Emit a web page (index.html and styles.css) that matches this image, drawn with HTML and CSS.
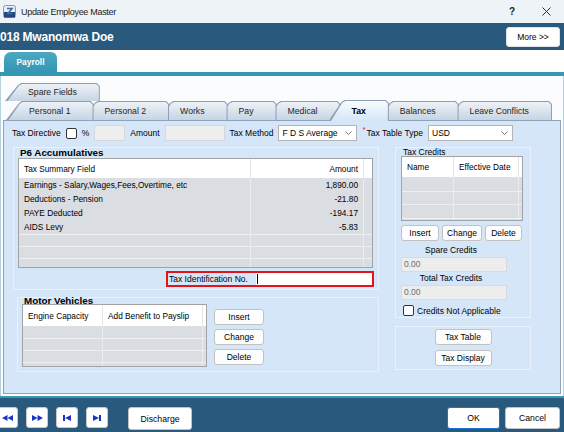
FILE: index.html
```html
<!DOCTYPE html>
<html lang="en">
<head>
    <meta charset="UTF-8">
    <title>Update Employee Master</title>
    <link rel="stylesheet" href="styles.css">
</head>
<body>
    <div class="window">
        <div class="titlebar">
            <svg class="app-icon" viewBox="0 0 13 13">
                <rect x="0.5" y="0.5" width="12" height="12" rx="2" fill="#e9eef3" stroke="#8a98a8"/>
                <rect x="1" y="7" width="11" height="5.5" fill="#25467c"/>
                <path d="M4 3.5 h5 l-4 5 h4.5" fill="none" stroke="#3a6fb5" stroke-width="1.6"/>
            </svg>
            <span class="title">Update Employee Master</span>
            <span class="help">?</span>
            <svg class="close" viewBox="0 0 9 9">
                <path d="M0.5 0.5 L8.5 8.5 M8.5 0.5 L0.5 8.5" stroke="#2a2a2a" stroke-width="1"/>
            </svg>
        </div>

        <div class="header">
            <span class="employee">018 Mwanomwa Doe</span>
            <button class="btn btn-more">More &gt;&gt;</button>
        </div>

        <div class="modules">
            <div class="module-tab">Payroll</div>
        </div>

        <div class="frame">
            <div class="tabstrip">
                <div class="tab-row first-row">
                    <div class="tab">Spare Fields</div>
                </div>
                <div class="tab-row">
                    <div class="tab">Personal 1</div>
                    <div class="tab">Personal 2</div>
                    <div class="tab">Works</div>
                    <div class="tab">Pay</div>
                    <div class="tab">Medical</div>
                    <div class="tab active">Tax</div>
                    <div class="tab">Balances</div>
                    <div class="tab">Leave Conflicts</div>
                </div>
            </div>

            <div class="page">
                <div class="tax-row">
                    <span>Tax Directive</span>
                    <span class="check"></span>
                    <span>%</span>
                    <span class="field field-pct"></span>
                    <span>Amount</span>
                    <span class="field field-amount"></span>
                    <span>Tax Method</span>
                    <div class="select select-method">
                        <span>F D S Average</span>
                        <svg class="chevron" viewBox="0 0 7 4"><polyline points="0.5,0.5 3.5,3.5 6.5,0.5" fill="none" stroke="#666" stroke-width="0.9"/></svg>
                    </div>
                    <span class="required">*</span>
                    <span>Tax Table Type</span>
                    <div class="select select-table">
                        <span>USD</span>
                        <svg class="chevron" viewBox="0 0 7 4"><polyline points="0.5,0.5 3.5,3.5 6.5,0.5" fill="none" stroke="#666" stroke-width="0.9"/></svg>
                    </div>
                </div>

                <div class="page-body">
                    <div class="left-col">
                        <div class="group p6">
                            <div class="group-title">P6 Accumulatives</div>
                            <div class="grid p6-grid">
                                <div class="th">Tax Summary Field</div>
                                <div class="th num">Amount</div>
                                <div class="th fill"></div>

                                <div>Earnings - Salary,Wages,Fees,Overtime, etc</div>
                                <div class="num">1,890.00</div>
                                <div class="fill"></div>

                                <div>Deductions - Pension</div>
                                <div class="num">-21.80</div>
                                <div class="fill"></div>

                                <div>PAYE Deducted</div>
                                <div class="num">-194.17</div>
                                <div class="fill"></div>

                                <div>AIDS Levy</div>
                                <div class="num">-5.83</div>
                                <div class="fill"></div>

                                <div class="line"></div><div class="line"></div><div class="line fill"></div>
                                <div class="line"></div><div class="line"></div><div class="line fill"></div>
                                <div class="line"></div><div class="line"></div><div class="line fill"></div>
                            </div>
                            <div class="tin-row">
                                <div class="tin">
                                    <span class="tin-label">Tax Identification No.</span>
                                    <span class="tin-input"><span class="caret"></span></span>
                                </div>
                            </div>
                        </div>

                        <div class="group motor">
                            <div class="group-title">Motor Vehicles</div>
                            <div class="motor-body">
                                <div class="grid motor-grid">
                                    <div class="th">Engine Capacity</div>
                                    <div class="th">Add Benefit to Payslip</div>
                                    <div class="th fill"></div>
                                    <div></div><div></div><div class="fill"></div>
                                    <div class="line"></div><div class="line"></div><div class="line fill"></div>
                                    <div class="line"></div><div class="line"></div><div class="line fill"></div>
                                    <div class="line"></div><div class="line"></div><div class="line fill"></div>
                                </div>
                                <div class="motor-actions">
                                    <button class="btn">Insert</button>
                                    <button class="btn">Change</button>
                                    <button class="btn">Delete</button>
                                </div>
                            </div>
                        </div>
                    </div>

                    <div class="right-col">
                        <div class="group credits">
                            <div class="group-title">Tax Credits</div>
                            <div class="grid credits-grid">
                                <div class="th">Name</div>
                                <div class="th">Effective Date</div>
                                <div class="th fill"></div>
                                <div></div><div></div><div class="fill"></div>
                                <div class="line"></div><div class="line"></div><div class="line fill"></div>
                                <div class="line"></div><div class="line"></div><div class="line fill"></div>
                                <div class="line"></div><div class="line"></div><div class="line fill"></div>
                            </div>
                            <div class="credit-actions">
                                <button class="btn btn-insert">Insert</button>
                                <button class="btn btn-change">Change</button>
                                <button class="btn btn-delete">Delete</button>
                            </div>
                            <div class="caption">Spare Credits</div>
                            <div class="readonly">0.00</div>
                            <div class="caption">Total Tax Credits</div>
                            <div class="readonly">0.00</div>
                            <div class="check-row">
                                <span class="check"></span>
                                <span>Credits Not Applicable</span>
                            </div>
                        </div>

                        <div class="group tables">
                            <button class="btn">Tax Table</button>
                            <button class="btn">Tax Display</button>
                        </div>
                    </div>
                </div>
            </div>
        </div>

        <div class="footer">
            <button class="nav">
                <svg viewBox="0 0 11 6"><polygon points="0,3 5.5,0 5.5,6"/><polygon points="5.5,3 11,0 11,6"/></svg>
            </button>
            <button class="nav">
                <svg viewBox="0 0 11 6"><polygon points="0,0 5.5,3 0,6"/><polygon points="5.5,0 11,3 5.5,6"/></svg>
            </button>
            <button class="nav">
                <svg class="single" viewBox="0 0 8 6"><rect x="0" y="0" width="2" height="6"/><polygon points="2,3 8,0 8,6"/></svg>
            </button>
            <button class="nav">
                <svg class="single" viewBox="0 0 8 6"><polygon points="0,0 6,3 0,6"/><rect x="6" y="0" width="2" height="6"/></svg>
            </button>
            <button class="btn btn-discharge">Discharge</button>
            <button class="btn btn-ok">OK</button>
            <button class="btn btn-cancel">Cancel</button>
        </div>
    </div>
</body>
</html>
```

FILE: styles.css
```css
* {
    box-sizing: border-box;
}

body {
    margin: 0;
    font-family: "Liberation Sans", Arial, sans-serif;
    font-size: 8.5px;
    color: #000;
    background: #fff;
}

.window {
    width: 564px;
    height: 432px;
    overflow: hidden;
    display: flex;
    flex-direction: column;
}

/* title bar */
.titlebar {
    flex: none;
    height: 23px;
    display: flex;
    align-items: center;
    background: #eef3f7;
}

.app-icon {
    width: 13px;
    height: 13px;
    margin-left: 3px;
}

.title {
    margin-left: 5px;
    font-size: 9px;
    letter-spacing: -0.3px;
    color: #1b1b1b;
}

.help {
    margin-left: auto;
    font-size: 10px;
    font-weight: bold;
    color: #222;
}

.close {
    width: 9px;
    height: 9px;
    margin-left: 27px;
    margin-right: 13px;
}

/* employee header */
.header {
    flex: none;
    height: 27px;
    display: flex;
    align-items: center;
    background: #29597c;
}

.employee {
    color: #fff;
    font-weight: bold;
    font-size: 12px;
    letter-spacing: -0.2px;
}

.btn {
    font-family: inherit;
    font-size: 8.5px;
    color: #000;
    background: #fdfdfd;
    border: 1px solid #c2c2c2;
    border-radius: 3px;
    padding: 0;
    height: 16px;
}

.btn-more {
    margin-left: auto;
    margin-right: 4px;
    width: 54px;
    height: 20px;
    background: #fff;
    border-color: #dde3e8;
}

/* module tabs */
.modules {
    flex: none;
    height: 26px;
    display: flex;
    align-items: flex-end;
    padding-left: 4px;
    background: #fff;
    border-bottom: 4px solid #3597b3;
}

.module-tab {
    width: 53px;
    height: 20px;
    display: flex;
    align-items: center;
    justify-content: center;
    background: linear-gradient(#4aa8c2, #3597b3);
    border-radius: 7px 6px 0 0;
    color: #fff;
    font-weight: bold;
    font-size: 8.4px;
}

/* tab control */
.frame {
    flex: none;
    height: 320px;
    padding: 7px 2px 2px 2px;
    background: #fbfcfe;
    border-left: 1px solid #b7d0dd;
    border-right: 1px solid #b7d0dd;
}

.tabstrip {
    display: flex;
    flex-direction: column;
}

.tab-row {
    display: flex;
    align-items: flex-end;
    height: 19px;
    padding-left: 3px;
}

.tab-row.first-row {
    height: 18px;
    padding-left: 2px;
}

.tab {
    position: relative;
    z-index: 1;
    height: 100%;
    padding: 0 23px;
    display: flex;
    align-items: center;
    justify-content: center;
    white-space: nowrap;
    font-size: 8.7px;
    color: #1f1f1f;
    background: #8c9fb4;
    clip-path: polygon(0 100%, 13px 2px, 16px 0, calc(100% - 3px) 0, 100% 3px, 100% 100%);
}

.tab::before {
    content: "";
    position: absolute;
    top: 1px;
    left: 1px;
    right: 1px;
    bottom: 0;
    z-index: -1;
    background: linear-gradient(#eef2f7, #c6d4e3);
    clip-path: polygon(1.5px 100%, 13px 1.5px, 16px 0, calc(100% - 2.5px) 0, 100% 2.5px, 100% 100%);
}

.tab + .tab {
    margin-left: -12px;
}

.tab:nth-child(1) { z-index: 9; }
.tab:nth-child(2) { z-index: 8; }
.tab:nth-child(3) { z-index: 7; }
.tab:nth-child(4) { z-index: 6; }
.tab:nth-child(5) { z-index: 5; }
.tab:nth-child(6) { z-index: 4; }
.tab:nth-child(7) { z-index: 3; }
.tab:nth-child(8) { z-index: 2; }

.tab.active {
    z-index: 20;
    height: 21px;
    margin-bottom: -1px;
    font-weight: bold;
    color: #000;
}

.tab.active::before {
    background: linear-gradient(#f8fbfe, #d5e6f8);
}

.page {
    height: 274px;
    border: 1px solid #8fa4ba;
    background: #d5e6f8;
}

/* top row */
.tax-row {
    display: flex;
    align-items: center;
    gap: 5px;
    height: 16px;
    margin-top: 4px;
    padding-left: 8px;
    white-space: nowrap;
}

.check {
    flex: none;
    width: 11px;
    height: 11px;
    background: #fff;
    border: 1px solid #333;
    border-radius: 2px;
}

.field {
    height: 16px;
    background: #eeeeee;
    border: 1px solid #d4d8dc;
}

.field-pct {
    width: 31px;
}

.field-amount {
    width: 60px;
}

.select {
    height: 16px;
    display: flex;
    align-items: center;
    justify-content: space-between;
    padding: 0 4px 0 3px;
    background: #fff;
    border: 1px solid #b4b4b4;
}

.select-method {
    width: 79px;
}

.select-table {
    width: 85px;
}

.chevron {
    width: 7px;
    height: 4px;
}

.required {
    align-self: flex-start;
    margin-right: -4px;
    color: #e0262b;
    font-size: 8px;
}

/* body */
.page-body {
    display: flex;
    margin-top: 6px;
    padding-left: 9px;
}

.left-col {
    width: 366px;
}

.right-col {
    width: 136px;
    margin-left: 16px;
}

.group {
    border: 1px solid #e9f1fa;
}

.group-title {
    height: 10px;
    line-height: 10px;
    margin-left: 6px;
    font-weight: bold;
    font-size: 9.8px;
}

.p6 {
    height: 143px;
}

.grid {
    display: grid;
    align-content: start;
    overflow: hidden;
    font-size: 8.3px;
    background: #dadde1;
    border: 1px solid #a3a3a3;
}

.grid > div {
    display: flex;
    align-items: center;
    padding: 0 5px;
    white-space: nowrap;
    overflow: hidden;
    border-right: 1px solid #eaedf0;
}

.grid .th {
    background: #fff;
    border-right-color: #e4e4e4;
}

.grid .num {
    justify-content: flex-end;
}

.grid .fill {
    border-right: none;
}

.grid .line {
    border-top: 1px solid #eef0f3;
}

.p6-grid {
    width: 355px;
    height: 110px;
    margin-left: 4px;
    grid-template-columns: 232px 113px 1fr;
    grid-template-rows: 19px repeat(4, 14px) 12px 12px 12px;
}

.tin-row {
    display: flex;
    justify-content: flex-end;
    margin-top: 3px;
    margin-right: 4px;
}

.tin {
    display: flex;
    width: 208px;
    height: 16px;
    border: 2px solid #e1141c;
}

.tin-label {
    width: 88px;
    line-height: 12px;
    padding-left: 1px;
    white-space: nowrap;
}

.tin-input {
    flex: 1;
    display: flex;
    align-items: center;
    padding-left: 1px;
    background: #fff;
}

.caret {
    width: 1px;
    height: 10px;
    background: #000;
}

.motor {
    width: 362px;
    height: 75px;
    margin-top: 7px;
    margin-left: 4px;
}

.motor .group-title {
    height: 6px;
    line-height: 6px;
}

.motor-body {
    display: flex;
    margin-left: 4px;
}

.motor-grid {
    width: 185px;
    height: 63px;
    grid-template-columns: 80px 100px 1fr;
    grid-template-rows: 21px 12px 12px 12px 12px;
}

.motor-actions {
    display: flex;
    flex-direction: column;
    gap: 4px;
    margin-left: 7px;
    padding-top: 5px;
}

.motor-actions .btn {
    width: 50px;
}

/* tax credits */
.credits {
    height: 171px;
}

.credits .group-title {
    height: 8px;
    line-height: 8px;
    margin-left: 7px;
    font-weight: normal;
    font-size: 8.5px;
}

.credits-grid {
    width: 122px;
    height: 65px;
    margin-left: 5px;
    grid-template-columns: 52px 65px 1fr;
    grid-template-rows: 20px 14px 13px 14px 14px;
}

.credit-actions {
    display: flex;
    gap: 3px;
    margin: 4px 0 0 5px;
}

.btn-insert {
    width: 38px;
}

.btn-change {
    width: 40px;
}

.btn-delete {
    width: 37px;
}

.caption {
    width: 100px;
    height: 13px;
    line-height: 13px;
    margin-left: 5px;
    text-align: center;
}

.credit-actions + .caption {
    margin-top: 3px;
}

.readonly {
    width: 106px;
    height: 15px;
    margin-left: 5px;
    padding-left: 2px;
    line-height: 13px;
    color: #6d6d6d;
    background: #ededed;
    border: 1px solid #d8dadd;
}

.check-row {
    display: flex;
    align-items: center;
    gap: 3px;
    height: 11px;
    margin: 5px 0 0 7px;
}

.tables {
    height: 44px;
    margin-top: 8px;
    padding-top: 2px;
    display: flex;
    flex-direction: column;
    align-items: center;
    gap: 5px;
}

.tables .btn {
    width: 57px;
}

/* footer */
.footer {
    flex: none;
    height: 36px;
    display: flex;
    align-items: flex-start;
    padding-top: 9px;
    background: #29597c;
    border-top: 2px solid #3a9ab5;
}

.nav {
    width: 22px;
    height: 21px;
    display: flex;
    align-items: center;
    justify-content: center;
    padding: 0;
    background: #fff;
    border: 1px solid #c9c9c9;
    border-radius: 3px;
}

.nav:first-child {
    margin-left: -4px;
}

.nav + .nav {
    margin-left: 8px;
}

.nav svg {
    width: 11px;
    height: 6px;
    fill: #1a33c6;
}

.nav svg.single {
    width: 8px;
}

.btn-discharge {
    width: 64px;
    height: 23px;
    margin-left: 20px;
    background: #fff;
    font-size: 8.7px;
}

.btn-ok {
    width: 53px;
    height: 22px;
    margin-left: auto;
    background: #fff;
    border-color: #1a73d1;
    font-size: 8.7px;
}

.btn-cancel {
    width: 55px;
    height: 22px;
    margin-left: 5px;
    margin-right: 4px;
    background: #fff;
    font-size: 8.7px;
}
```
